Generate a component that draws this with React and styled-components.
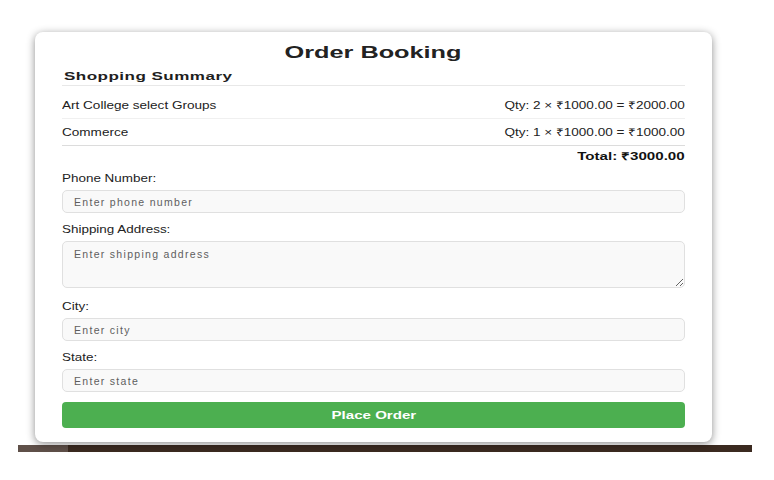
import React from "react";
import styled, { createGlobalStyle } from "styled-components";

const GlobalStyle = createGlobalStyle`
  body {
    margin: 0;
    background: #fff;
    font-family: "Liberation Sans", Arial, sans-serif;
  }
`;

const Page = styled.div`
  width: 774px;
  height: 480px;
  padding-top: 32px;
  box-sizing: border-box;
  overflow: hidden;
`;

const Card = styled.div`
  position: relative;
  z-index: 1;
  width: 677px;
  margin-left: 35px;
  box-sizing: border-box;
  padding: 11px 27px 14px;
  background: #fff;
  border-radius: 8px;
  box-shadow: 0 2px 8px rgba(0, 0, 0, 0.45);
  color: #222;
`;

// the reference type is drawn wide, so text runs are stretched horizontally
const Wide = styled.span`
  display: inline-block;
  transform: scaleX(${p => p.$scale || 1.29});
  transform-origin: ${p => p.$origin || "left"} center;
`;

const Title = styled.h1`
  margin: 0 0 6px;
  text-align: center;
  font-size: 16px;
  line-height: 20px;
  font-weight: bold;
  color: #222;
`;

const SummaryHeading = styled.h2`
  margin: 0;
  padding: 0 2px 2px;
  font-size: 11px;
  line-height: 14px;
  font-weight: bold;
  letter-spacing: 0.3px;
  color: #1e1e1e;
  border-bottom: 1px solid #e8e8e8;
`;

const ItemList = styled.div`
  margin-top: 6px;
`;

const ItemRow = styled.div`
  display: flex;
  justify-content: space-between;
  align-items: center;
  height: 26px;
  font-size: 10.5px;
  color: #222;
  border-bottom: 1px solid ${p => (p.$last ? "#dcdcdc" : "#f0f0f0")};
`;

const Total = styled.div`
  text-align: right;
  font-size: 10.5px;
  line-height: 14px;
  font-weight: bold;
  padding: 3px 0 9px;
  color: #111;
`;

const Field = styled.div`
  display: flex;
  flex-direction: column;
  align-items: stretch;
  margin-bottom: ${p => (p.$spaced ? "12px" : "10px")};
`;

const Label = styled.label`
  font-size: 10.5px;
  line-height: 13px;
  color: #222;
  margin-bottom: 5px;
`;

const controlStyles = `
  box-sizing: border-box;
  padding: 0 11px;
  font-family: "Liberation Sans", Arial, sans-serif;
  font-size: 10.5px;
  letter-spacing: 1.3px;
  background: #f9f9f9;
  border: 1px solid #e0e0e0;
  border-radius: 5px;
  outline: none;
  &::placeholder { color: #5e5e5e; }
`;

const Input = styled.input`
  ${controlStyles}
  height: 23px;
`;

const TextArea = styled.textarea`
  ${controlStyles}
  height: 47px;
  padding-top: 6px;
  resize: vertical;
`;

const SubmitButton = styled.button`
  width: 100%;
  height: 26px;
  border: none;
  border-radius: 4px;
  background: #4caf50;
  color: #fff;
  font-family: inherit;
  font-size: 11px;
  font-weight: bold;
  cursor: pointer;
`;

const Strip = styled.div`
  display: flex;
  width: 734px;
  height: 7px;
  margin: 3px 0 0 18px;
`;

const StripPart = styled.div`
  width: ${p => p.$w || "auto"};
  flex: ${p => (p.$grow ? 1 : "none")};
  background: ${p => p.$color};
`;

const items = [
  { name: "Art College select Groups", qty: 2, price: 1000 },
  { name: "Commerce", qty: 1, price: 1000 },
];

const fields = [
  { label: "Phone Number:", placeholder: "Enter phone number" },
  { label: "Shipping Address:", placeholder: "Enter shipping address", multiline: true },
  { label: "City:", placeholder: "Enter city" },
  { label: "State:", placeholder: "Enter state" },
];

export default function App() {
  const total = items.reduce((s, i) => s + i.qty * i.price, 0);
  return (
    <Page>
      <GlobalStyle />
      <Card>
        <Title>
          <Wide $scale={1.58} $origin="center">Order Booking</Wide>
        </Title>
        <SummaryHeading>
          <Wide $scale={1.55}>Shopping Summary</Wide>
        </SummaryHeading>
        <ItemList>
          {items.map((it, idx) => (
            <ItemRow key={it.name} $last={idx === items.length - 1}>
              <Wide>{it.name}</Wide>
              <Wide $origin="right">
                Qty: {it.qty} × ₹{it.price.toFixed(2)} = ₹{(it.qty * it.price).toFixed(2)}
              </Wide>
            </ItemRow>
          ))}
        </ItemList>
        <Total>
          <Wide $scale={1.44} $origin="right">Total: ₹{total.toFixed(2)}</Wide>
        </Total>
        {fields.map(f => (
          <Field key={f.label} $spaced={f.multiline}>
            <Label>
              <Wide $scale={1.28}>{f.label}</Wide>
            </Label>
            {f.multiline ? (
              <TextArea placeholder={f.placeholder} />
            ) : (
              <Input placeholder={f.placeholder} />
            )}
          </Field>
        ))}
        <SubmitButton>
          <Wide $scale={1.37} $origin="center">Place Order</Wide>
        </SubmitButton>
      </Card>
      <Strip>
        <StripPart $w="50px" $color="#5f5049" />
        <StripPart $grow $color="#3b2a20" />
      </Strip>
    </Page>
  );
}
